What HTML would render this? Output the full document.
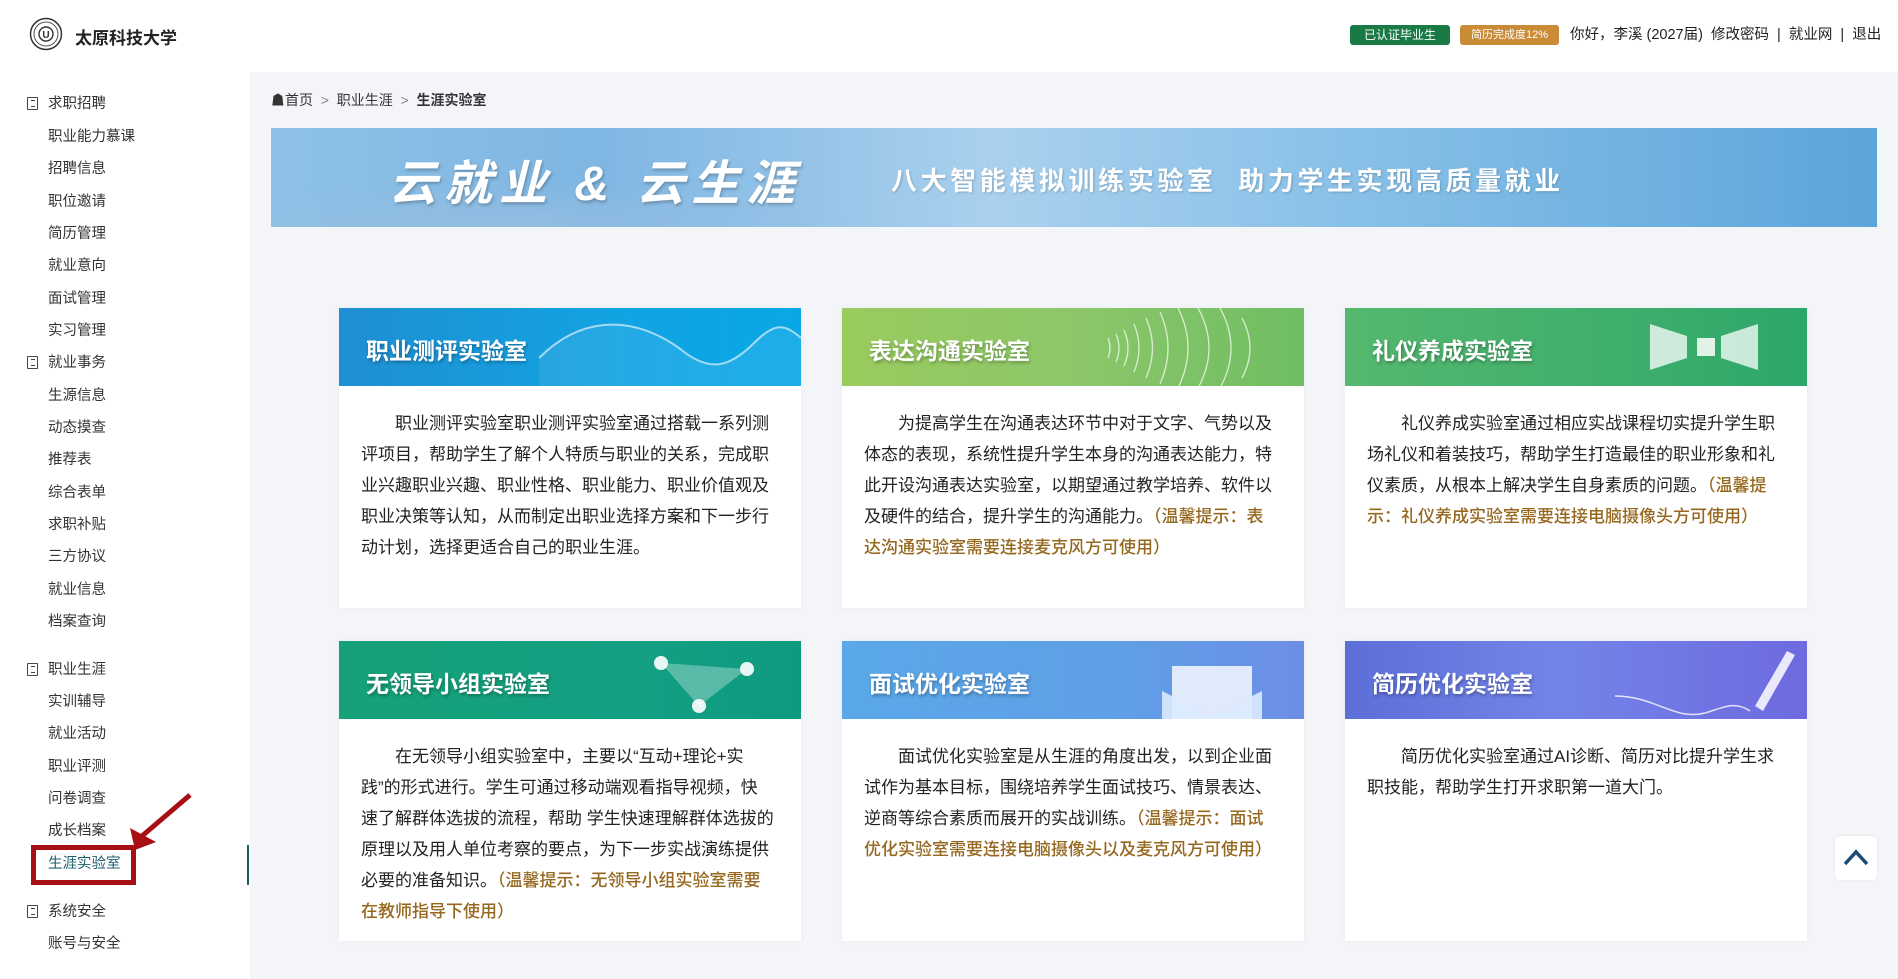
<!DOCTYPE html>
<html><head><meta charset="utf-8"><style>
*{margin:0;padding:0;box-sizing:border-box}
body{width:1898px;height:979px;overflow:hidden;background:#f3f5f9;font-family:"Liberation Sans","Noto Sans CJK SC",sans-serif;color:#222;position:relative}
.hdr{position:absolute;left:0;top:0;width:1898px;height:72px;background:#fff}
.side{position:absolute;left:0;top:72px;width:250px;height:907px;background:#fff}
.abs{position:absolute;white-space:nowrap}
.si{position:absolute;left:48px;font-size:14.5px;color:#333;line-height:20px;white-space:nowrap}
.gi{position:absolute;left:27px;width:11px;height:13px;border:1.5px solid #444;border-radius:1px}
.gi:after{content:"";position:absolute;left:3px;top:2px;width:4px;height:5px;border-top:1.5px solid #444;border-bottom:1.5px solid #444}
.card{position:absolute;width:462px;height:300px;background:#fff;box-shadow:0 0 6px rgba(0,0,0,.04)}
.ch{height:78px;position:relative;overflow:hidden}
.ch b{position:absolute;left:27px;top:24px;font-size:23px;color:#fff;font-weight:bold;text-shadow:1px 2px 3px rgba(0,0,0,.3)}
.cb{padding:22px 0 0 22px;font-size:17px;line-height:31px;color:#222}
.cb div{white-space:nowrap}
.tip{color:#96681f;font-weight:500}
</style></head><body>
<div class="hdr"></div>
<svg class="abs" style="left:29px;top:17px" width="34" height="34" viewBox="0 0 34 34"><circle cx="17" cy="17" r="15.5" fill="none" stroke="#333" stroke-width="1.5"/><circle cx="17" cy="17" r="12" fill="none" stroke="#555" stroke-width="1"/><circle cx="17" cy="17" r="7" fill="none" stroke="#333" stroke-width="1.4"/><text x="17" y="21" font-size="10" text-anchor="middle" font-weight="bold" fill="#333" font-family="Liberation Sans">U</text></svg>
<div class="abs" style="left:75px;top:24px;font-size:17px;font-weight:bold;color:#222">太原科技大学</div>
<div class="abs" style="left:1350px;top:25px;width:100px;height:20px;background:#1a7a45;border-radius:3px;color:#fff;font-size:12px;line-height:20px;text-align:center">已认证毕业生</div>
<div class="abs" style="left:1460px;top:25px;width:99px;height:20px;background:#c98b36;border-radius:3px;color:#fff;font-size:11px;line-height:20px;text-align:center">简历完成度12%</div>
<div class="abs" style="left:1570px;top:25px;font-size:14.5px;line-height:20px;color:#222">你好，李溪 (2027届) &nbsp;修改密码 &nbsp;| &nbsp;就业网 &nbsp;| &nbsp;退出</div>

<div class="side"></div>
<div class="gi" style="top:97px"></div><div class="si" style="left:48px;top:94px">求职招聘</div>
<div class="si" style="top:127px">职业能力慕课</div>
<div class="si" style="top:159px">招聘信息</div>
<div class="si" style="top:192px">职位邀请</div>
<div class="si" style="top:224px">简历管理</div>
<div class="si" style="top:256px">就业意向</div>
<div class="si" style="top:289px">面试管理</div>
<div class="si" style="top:321px">实习管理</div>
<div class="gi" style="top:356px"></div><div class="si" style="top:353px">就业事务</div>
<div class="si" style="top:386px">生源信息</div>
<div class="si" style="top:418px">动态摸查</div>
<div class="si" style="top:450px">推荐表</div>
<div class="si" style="top:483px">综合表单</div>
<div class="si" style="top:515px">求职补贴</div>
<div class="si" style="top:547px">三方协议</div>
<div class="si" style="top:580px">就业信息</div>
<div class="si" style="top:612px">档案查询</div>
<div class="gi" style="top:663px"></div><div class="si" style="top:660px">职业生涯</div>
<div class="si" style="top:692px">实训辅导</div>
<div class="si" style="top:724px">就业活动</div>
<div class="si" style="top:757px">职业评测</div>
<div class="si" style="top:789px">问卷调查</div>
<div class="si" style="top:821px">成长档案</div>
<div class="si" style="top:854px;color:#1d5f6e">生涯实验室</div>
<div class="abs" style="left:31px;top:845px;width:105px;height:40px;border:5px solid #a80f14"></div>
<div class="abs" style="left:247px;top:845px;width:2px;height:40px;background:#1d5f5a"></div>
<svg class="abs" style="left:120px;top:790px" width="80" height="70"><line x1="70" y1="5" x2="22" y2="46" stroke="#a80f14" stroke-width="5"/><polygon points="15,60 10,38 36,52" fill="#a80f14"/></svg>
<div class="gi" style="top:905px"></div><div class="si" style="top:902px">系统安全</div>
<div class="si" style="top:934px">账号与安全</div>

<div class="abs" style="left:271px;top:90px;font-size:14px;color:#333">&#9751;首页 &nbsp;<span style="color:#888">&gt;</span>&nbsp; 职业生涯 &nbsp;<span style="color:#888">&gt;</span>&nbsp; <b>生涯实验室</b></div>

<div class="abs" style="left:271px;top:128px;width:1606px;height:99px;background:linear-gradient(90deg,#8fc1e6 0%,#7fb6e2 20%,#a9d0ee 45%,#8cc2e8 65%,#5ba5db 100%);overflow:hidden">
<div style="position:absolute;left:0;top:55px;width:600px;height:50px;background:radial-gradient(ellipse at 40% 80%,rgba(150,190,225,.8),transparent 70%)"></div>
<div class="abs" style="left:118px;top:16px;font-size:48px;font-weight:bold;font-style:italic;color:#fff;letter-spacing:7px;text-shadow:1px 2px 3px rgba(0,0,0,.25)">云就业 &amp; 云生涯</div>
<div class="abs" style="left:620px;top:33px;font-size:26px;font-weight:bold;color:#fff;letter-spacing:3.6px;text-shadow:1px 1px 2px rgba(0,0,0,.2)">八大智能模拟训练实验室 &nbsp;助力学生实现高质量就业</div>
</div>

<div class="card" style="left:339px;top:308px">
<div class="ch" style="background:linear-gradient(90deg,#1f8fd2,#12a3e3 60%,#0aa7e6)"><b>职业测评实验室</b>
<svg class="abs" style="left:200px;top:0" width="262" height="78"><path d="M0 50 C40 10 90 5 140 40 C170 65 190 60 215 35 C235 15 245 15 262 30" fill="none" stroke="rgba(255,255,255,.6)" stroke-width="2"/><path d="M0 50 C40 10 90 5 140 40 C170 65 190 60 215 35 C235 15 245 15 262 30 L262 78 L0 78Z" fill="rgba(255,255,255,.08)"/></svg></div>
<div class="cb"><div>　　职业测评实验室职业测评实验室通过搭载一系列测</div><div>评项目，帮助学生了解个人特质与职业的关系，完成职</div><div>业兴趣职业兴趣、职业性格、职业能力、职业价值观及</div><div>职业决策等认知，从而制定出职业选择方案和下一步行</div><div>动计划，选择更适合自己的职业生涯。</div></div></div>

<div class="card" style="left:842px;top:308px">
<div class="ch" style="background:linear-gradient(90deg,#9acb5e,#8cc769 50%,#6fbd63)"><b>表达沟通实验室</b>
<svg class="abs" style="left:260px;top:0" width="202" height="78" fill="none" stroke="rgba(255,255,255,.7)" stroke-width="1.3"><path d="M6 30 q4 10 0 20"/><path d="M14 26 q6 14 0 28"/><path d="M22 22 q8 18 0 36"/><path d="M32 16 q10 24 0 48"/><path d="M44 10 q13 30 0 60"/><path d="M58 4 q16 36 0 72"/><path d="M76 0 q20 40 0 80"/><path d="M96 0 q22 40 0 80"/><path d="M118 0 q22 40 0 80"/><path d="M140 10 q16 30 0 60"/></svg></div>
<div class="cb"><div>　　为提高学生在沟通表达环节中对于文字、气势以及</div><div>体态的表现，系统性提升学生本身的沟通表达能力，特</div><div>此开设沟通表达实验室，以期望通过教学培养、软件以</div><div>及硬件的结合，提升学生的沟通能力。<span class="tip">（温馨提示：表</span></div><div class="tip">达沟通实验室需要连接麦克风方可使用）</div></div></div>

<div class="card" style="left:1345px;top:308px">
<div class="ch" style="background:linear-gradient(90deg,#55b86f,#3fae6c 60%,#2ba76a)"><b>礼仪养成实验室</b>
<svg class="abs" style="left:300px;top:0" width="162" height="78"><polygon points="5,16 42,28 42,50 5,62" fill="rgba(255,255,255,.75)"/><rect x="52" y="30" width="18" height="18" fill="rgba(255,255,255,.85)"/><polygon points="113,16 76,28 76,50 113,62" fill="rgba(255,255,255,.75)"/></svg></div>
<div class="cb"><div>　　礼仪养成实验室通过相应实战课程切实提升学生职</div><div>场礼仪和着装技巧，帮助学生打造最佳的职业形象和礼</div><div>仪素质，从根本上解决学生自身素质的问题。<span class="tip">（温馨提</span></div><div class="tip">示：礼仪养成实验室需要连接电脑摄像头方可使用）</div></div></div>

<div class="card" style="left:339px;top:641px">
<div class="ch" style="background:linear-gradient(90deg,#17a17a,#13a082 60%,#0f9a80)"><b>无领导小组实验室</b>
<svg class="abs" style="left:300px;top:0" width="162" height="78"><polygon points="22,22 108,28 60,65" fill="rgba(255,255,255,.3)"/><circle cx="22" cy="22" r="7" fill="#fff" opacity=".9"/><circle cx="108" cy="28" r="7" fill="#fff" opacity=".9"/><circle cx="60" cy="65" r="7" fill="#fff" opacity=".9"/></svg></div>
<div class="cb"><div>　　在无领导小组实验室中，主要以“互动+理论+实</div><div>践”的形式进行。学生可通过移动端观看指导视频，快</div><div>速了解群体选拔的流程，帮助 学生快速理解群体选拔的</div><div>原理以及用人单位考察的要点，为下一步实战演练提供</div><div>必要的准备知识。<span class="tip">（温馨提示：无领导小组实验室需要</span></div><div class="tip">在教师指导下使用）</div></div></div>

<div class="card" style="left:842px;top:641px">
<div class="ch" style="background:linear-gradient(90deg,#5aa8e8,#5f9fe6 60%,#6d8ee6)"><b>面试优化实验室</b>
<svg class="abs" style="left:320px;top:0" width="142" height="78"><rect x="10" y="25" width="80" height="60" fill="rgba(255,255,255,.8)"/><polygon points="0,50 50,75 100,50 100,80 0,80" fill="rgba(220,235,255,.9)"/></svg></div>
<div class="cb"><div>　　面试优化实验室是从生涯的角度出发，以到企业面</div><div>试作为基本目标，围绕培养学生面试技巧、情景表达、</div><div>逆商等综合素质而展开的实战训练。<span class="tip">（温馨提示：面试</span></div><div class="tip">优化实验室需要连接电脑摄像头以及麦克风方可使用）</div></div></div>

<div class="card" style="left:1345px;top:641px">
<div class="ch" style="background:linear-gradient(90deg,#5c6fd8,#7384e8 45%,#6e6ae0)"><b>简历优化实验室</b>
<svg class="abs" style="left:270px;top:0" width="192" height="78"><path d="M0 55 C40 55 60 80 90 72 C110 66 120 60 135 70" fill="none" stroke="#fff" stroke-width="1.5" opacity=".8"/><path d="M140 65 L172 10 L180 14 L148 70Z" fill="rgba(255,255,255,.85)"/></svg></div>
<div class="cb"><div>　　简历优化实验室通过AI诊断、简历对比提升学生求</div><div>职技能，帮助学生打开求职第一道大门。</div></div></div>

<div class="abs" style="left:1835px;top:836px;width:42px;height:44px;background:#fff;border-radius:5px;box-shadow:0 0 4px rgba(0,0,0,.06)"><svg width="42" height="44"><path d="M10 28 L21 16 L32 28" fill="none" stroke="#1a4b74" stroke-width="3.5"/></svg></div>
</body></html>
